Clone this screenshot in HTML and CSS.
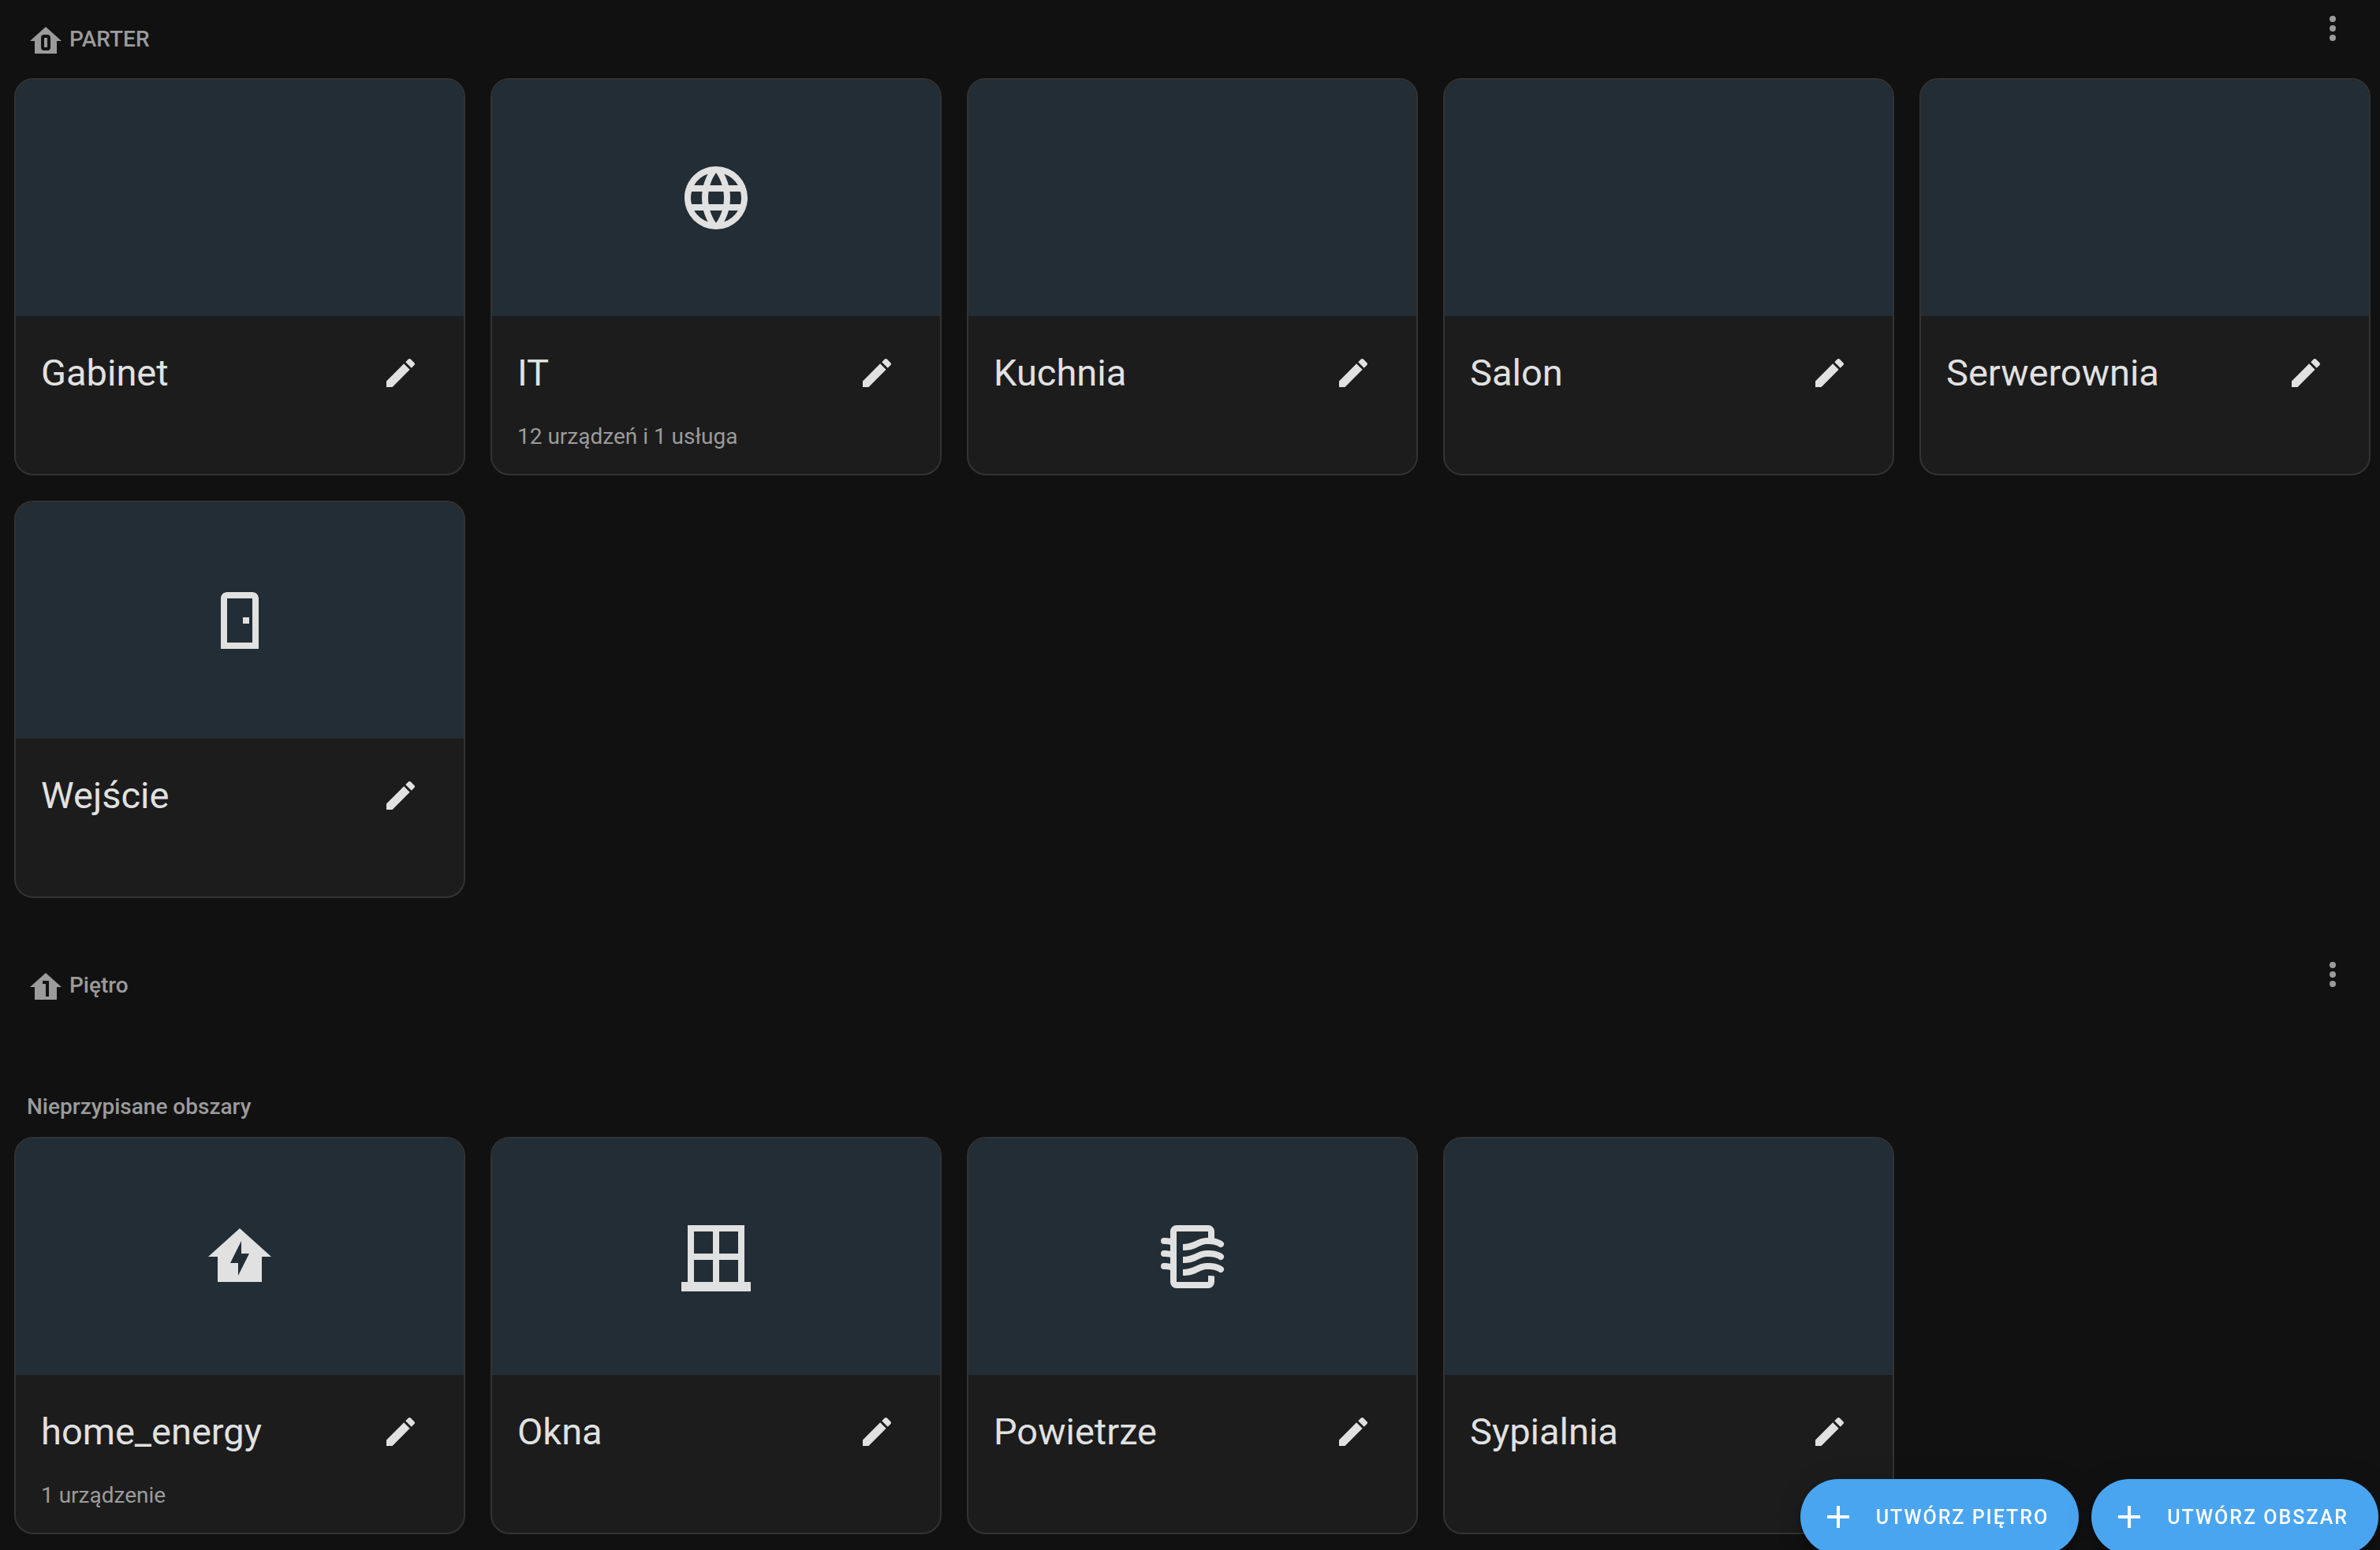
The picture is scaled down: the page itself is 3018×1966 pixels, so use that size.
FILE: index.html
```html
<!DOCTYPE html>
<html lang="pl">
<head>
<meta charset="utf-8">
<title>Obszary</title>
<link rel="stylesheet" href="styles.css">
</head>
<body>
<svg class="sprite" aria-hidden="true">
  <symbol id="pencil" viewBox="0 0 24 24"><path d="M20.71,7.04C21.1,6.65 21.1,6 20.71,5.63L18.37,3.29C18,2.9 17.35,2.9 16.96,3.29L15.12,5.12L18.87,8.87M3,17.25V21H6.75L17.81,9.93L14.06,6.18L3,17.25Z"/></symbol>
  <symbol id="dots" viewBox="0 0 24 24"><path d="M12,16A2,2 0 0,1 14,18A2,2 0 0,1 12,20A2,2 0 0,1 10,18A2,2 0 0,1 12,16M12,10A2,2 0 0,1 14,12A2,2 0 0,1 12,14A2,2 0 0,1 10,12A2,2 0 0,1 12,10M12,4A2,2 0 0,1 14,6A2,2 0 0,1 12,8A2,2 0 0,1 10,6A2,2 0 0,1 12,4Z"/></symbol>
  <symbol id="plus" viewBox="0 0 24 24"><path d="M19,13H13V19H11V13H5V11H11V5H13V11H19V13Z"/></symbol>
</svg>

<main class="page">
  <section class="floor">
    <header class="floor-header">
      <h2 class="floor-title">
        <svg class="icon" viewBox="0 0 24 24" aria-hidden="true"><path fill-rule="evenodd" d="M12 3L2 12H5V20H19V12H22L12 3M11 8H13A2 2 0 0 1 15 10V16A2 2 0 0 1 13 18H11A2 2 0 0 1 9 16V10A2 2 0 0 1 11 8M11 10V16H13V10Z"/></svg>
        <span>PARTER</span>
      </h2>
      <button class="icon-button menu" type="button" aria-label="Menu"><svg class="icon"><use href="#dots"/></svg></button>
    </header>
    <div class="areas">
      <article class="card">
        <div class="picture"></div>
        <div class="body">
          <div class="card-header"><h3 class="name">Gabinet</h3><button class="icon-button" type="button" aria-label="Edytuj"><svg class="icon"><use href="#pencil"/></svg></button></div>
        </div>
      </article>
      <article class="card">
        <div class="picture"><svg class="area-icon" viewBox="0 0 24 24" aria-hidden="true"><path d="M16.36,14C16.44,13.34 16.5,12.68 16.5,12C16.5,11.32 16.44,10.66 16.36,10H19.74C19.9,10.64 20,11.31 20,12C20,12.69 19.9,13.36 19.74,14M14.59,19.56C15.19,18.45 15.65,17.25 15.97,16H18.92C17.96,17.65 16.43,18.93 14.59,19.56M14.34,14H9.66C9.56,13.34 9.5,12.68 9.5,12C9.5,11.32 9.56,10.65 9.66,10H14.34C14.43,10.65 14.5,11.32 14.5,12C14.5,12.68 14.43,13.34 14.34,14M12,19.96C11.17,18.76 10.5,17.43 10.09,16H13.91C13.5,17.43 12.83,18.76 12,19.96M8,8H5.08C6.03,6.34 7.57,5.06 9.4,4.44C8.8,5.55 8.35,6.75 8,8M5.08,16H8C8.35,17.25 8.8,18.45 9.4,19.56C7.57,18.93 6.03,17.65 5.08,16M4.26,14C4.1,13.36 4,12.69 4,12C4,11.31 4.1,10.64 4.26,10H7.64C7.56,10.66 7.5,11.32 7.5,12C7.5,12.68 7.56,13.34 7.64,14M12,4.03C12.83,5.23 13.5,6.57 13.91,8H10.09C10.5,6.57 11.17,5.23 12,4.03M18.92,8H15.97C15.65,6.75 15.19,5.55 14.59,4.44C16.43,5.07 17.96,6.34 18.92,8M12,2C6.47,2 2,6.5 2,12A10,10 0 0,0 12,22A10,10 0 0,0 22,12A10,10 0 0,0 12,2Z"/></svg></div>
        <div class="body">
          <div class="card-header"><h3 class="name">IT</h3><button class="icon-button" type="button" aria-label="Edytuj"><svg class="icon"><use href="#pencil"/></svg></button></div>
          <p class="summary">12 urządzeń i 1 usługa</p>
        </div>
      </article>
      <article class="card">
        <div class="picture"></div>
        <div class="body">
          <div class="card-header"><h3 class="name">Kuchnia</h3><button class="icon-button" type="button" aria-label="Edytuj"><svg class="icon"><use href="#pencil"/></svg></button></div>
        </div>
      </article>
      <article class="card">
        <div class="picture"></div>
        <div class="body">
          <div class="card-header"><h3 class="name">Salon</h3><button class="icon-button" type="button" aria-label="Edytuj"><svg class="icon"><use href="#pencil"/></svg></button></div>
        </div>
      </article>
      <article class="card">
        <div class="picture"></div>
        <div class="body">
          <div class="card-header"><h3 class="name">Serwerownia</h3><button class="icon-button" type="button" aria-label="Edytuj"><svg class="icon"><use href="#pencil"/></svg></button></div>
        </div>
      </article>
      <article class="card">
        <div class="picture"><svg class="area-icon" viewBox="0 0 24 24" aria-hidden="true"><path d="M8,3C6.89,3 6,3.89 6,5V21H18V5C18,3.89 17.11,3 16,3H8M8,5H16V19H8V5M13,11V13H15V11H13Z"/></svg></div>
        <div class="body">
          <div class="card-header"><h3 class="name">Wejście</h3><button class="icon-button" type="button" aria-label="Edytuj"><svg class="icon"><use href="#pencil"/></svg></button></div>
        </div>
      </article>
    </div>
  </section>

  <section class="floor">
    <header class="floor-header">
      <h2 class="floor-title">
        <svg class="icon" viewBox="0 0 24 24" aria-hidden="true"><path fill-rule="evenodd" d="M12 3L2 12H5V20H19V12H22L12 3M10 8H14V18H12V10H10Z"/></svg>
        <span>Piętro</span>
      </h2>
      <button class="icon-button menu" type="button" aria-label="Menu"><svg class="icon"><use href="#dots"/></svg></button>
    </header>
  </section>

  <section class="floor">
    <h2 class="unassigned-title">Nieprzypisane obszary</h2>
    <div class="areas">
      <article class="card">
        <div class="picture"><svg class="area-icon" viewBox="0 0 24 24" aria-hidden="true"><path fill-rule="evenodd" d="M12 3L2 12H5V20H19V12H22L12 3M11.5 18V14H9L12.5 7V11H15L11.5 18Z"/></svg></div>
        <div class="body">
          <div class="card-header"><h3 class="name">home_energy</h3><button class="icon-button" type="button" aria-label="Edytuj"><svg class="icon"><use href="#pencil"/></svg></button></div>
          <p class="summary">1 urządzenie</p>
        </div>
      </article>
      <article class="card">
        <div class="picture"><svg class="area-icon" viewBox="0 0 24 24" aria-hidden="true"><path fill-rule="evenodd" d="M21 20V2H3V20H1V23H23V20H21M19 11H13V4H19V11M5 4H11V11H5V4M5 20V13H11V20H5M13 20V13H19V20H13Z"/></svg></div>
        <div class="body">
          <div class="card-header"><h3 class="name">Okna</h3><button class="icon-button" type="button" aria-label="Edytuj"><svg class="icon"><use href="#pencil"/></svg></button></div>
        </div>
      </article>
      <article class="card">
        <div class="picture"><svg class="area-icon" viewBox="0 0 24 24" aria-hidden="true">
          <path d="M19 7V4A2 2 0 0 0 17 2H7A2 2 0 0 0 5 4V20A2 2 0 0 0 7 22H17A2 2 0 0 0 19 20V18.17C18.5 18.05 17.8 18 17 18V20H7V4H17V7Z"/>
          <path d="M3 6A1 1 0 0 0 3 8C3.8 8 4.4 8.05 5 8.2V6.18C4.5 6.05 3.8 6 3 6ZM3 10A1 1 0 0 0 3 12C3.8 12 4.4 12.05 5 12.2V10.18C4.5 10.05 3.8 10 3 10ZM3 14A1 1 0 0 0 3 16C3.8 16 4.4 16.05 5 16.2V14.18C4.5 14.05 3.8 14 3 14Z"/>
          <path d="M9 8V10C13.6 10 13.8 8 17 8C18.6 8 19.4 8.2 20.4 8.8A1 1 0 0 0 21.6 7.2C20.3 6.3 18.8 6 17 6C13.2 6 12.6 8 9 8ZM9 12V14C13.6 14 13.8 12 17 12C18.6 12 19.4 12.2 20.4 12.8A1 1 0 0 0 21.6 11.2C20.3 10.3 18.8 10 17 10C13.2 10 12.6 12 9 12ZM9 16V18C13.6 18 13.8 16 17 16C18.6 16 19.4 16.2 20.4 16.8A1 1 0 0 0 21.6 15.2C20.3 14.3 18.8 14 17 14C13.2 14 12.6 16 9 16Z"/>
        </svg></div>
        <div class="body">
          <div class="card-header"><h3 class="name">Powietrze</h3><button class="icon-button" type="button" aria-label="Edytuj"><svg class="icon"><use href="#pencil"/></svg></button></div>
        </div>
      </article>
      <article class="card">
        <div class="picture"></div>
        <div class="body">
          <div class="card-header"><h3 class="name">Sypialnia</h3><button class="icon-button" type="button" aria-label="Edytuj"><svg class="icon"><use href="#pencil"/></svg></button></div>
        </div>
      </article>
    </div>
  </section>
</main>

<div class="fabs">
  <button class="fab" type="button"><svg class="icon"><use href="#plus"/></svg><span>UTWÓRZ PIĘTRO</span></button>
  <button class="fab" type="button"><svg class="icon"><use href="#plus"/></svg><span>UTWÓRZ OBSZAR</span></button>
</div>
</body>
</html>
```

FILE: styles.css
```css
* {
  box-sizing: border-box;
}

body {
  margin: 0;
  background: #111111;
  color: #e1e1e1;
  font-family: Roboto, "Noto Sans", sans-serif;
  font-size: 28px;
}

h2,
h3,
p {
  margin: 0;
}

button {
  border: 0;
  font: inherit;
  color: inherit;
  background: none;
  cursor: pointer;
}

.sprite {
  display: none;
}

.icon {
  flex: none;
  width: 48px;
  height: 48px;
  fill: currentColor;
}

.page {
  padding: 0 12px 20px 18px;
}

.floor-header {
  display: flex;
  align-items: flex-start;
  justify-content: space-between;
  height: 99px;
  color: #9b9b9b;
}

.floor-title {
  display: flex;
  align-items: flex-start;
  gap: 6px;
  padding: 28px 0 0 16px;
  font-size: 28px;
  font-weight: 500;
  line-height: 44px;
}

.icon-button {
  display: flex;
  flex: none;
  align-items: center;
  justify-content: center;
  width: 96px;
  height: 96px;
  padding: 0;
}

.icon-button.menu {
  height: 72px;
}

.areas {
  display: grid;
  grid-template-columns: repeat(auto-fill, minmax(500px, 1fr));
  gap: 32px;
}

.floor + .floor {
  margin-top: 61px;
}

.floor + .floor:last-child {
  margin-top: 83px;
}

.unassigned-title {
  padding: 0 16px 16px;
  color: #9b9b9b;
  font-size: 28px;
  font-weight: 500;
  line-height: 44px;
}

.card {
  overflow: hidden;
  border: 2px solid #333333;
  border-radius: 24px;
  background: #1c1c1c;
}

.picture {
  display: flex;
  align-items: center;
  justify-content: center;
  height: 300px;
  background: #232d35;
}

.area-icon {
  width: 96px;
  height: 96px;
  fill: #e1e1e1;
}

.body {
  min-height: 200px;
  padding: 24px 32px;
}

.card-header {
  display: flex;
  align-items: center;
  justify-content: space-between;
}

.name {
  font-size: 47px;
  font-weight: 400;
  line-height: 96px;
}

.summary {
  padding-top: 12px;
  color: #9b9b9b;
  line-height: 42px;
}

.fabs {
  position: fixed;
  right: 2px;
  bottom: -6px;
  display: flex;
  gap: 16px;
}

.fab {
  display: flex;
  align-items: center;
  gap: 24px;
  height: 96px;
  padding: 0 38px 0 24px;
  border-radius: 48px;
  background: #4aa5f0;
  color: #ffffff;
  font-size: 25px;
  font-weight: 500;
  letter-spacing: 2px;
  box-shadow: 0 6px 10px rgba(0, 0, 0, 0.2), 0 12px 20px rgba(0, 0, 0, 0.14), 0 2px 36px rgba(0, 0, 0, 0.12);
}
```
